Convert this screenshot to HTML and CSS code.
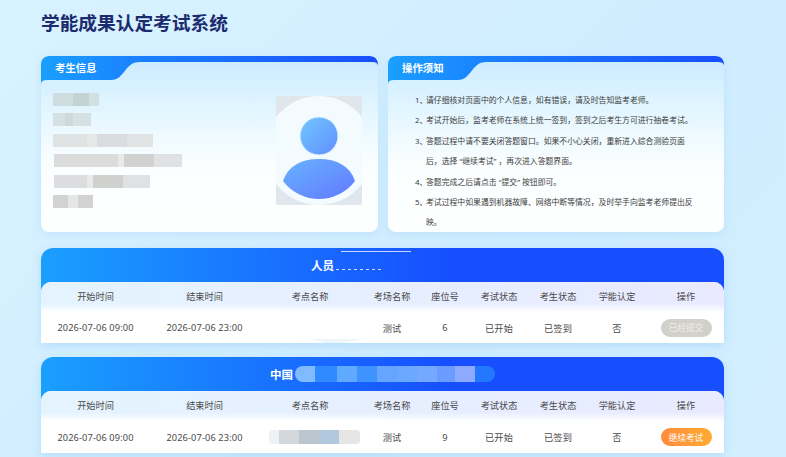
FILE: index.html
```html
<!DOCTYPE html>
<html lang="zh-CN">
<head>
    <meta charset="UTF-8">
    <meta name="viewport" content="width=device-width, initial-scale=1.0">
    <title>学能成果认定考试系统</title>
    <link rel="stylesheet" href="styles.css">
</head>
<body>
    <h1 class="page-title">学能成果认定考试系统</h1>

    <div class="cards">
        <!-- 考生信息 -->
        <section class="card">
            <svg class="card-shape" viewBox="0 0 337 28" preserveAspectRatio="none">
                <defs>
                    <linearGradient id="cardTab" x1="0" y1="0" x2="1" y2="0">
                        <stop offset="0" stop-color="#1a9fff"/>
                        <stop offset="0.3" stop-color="#1a80ff"/>
                        <stop offset="1" stop-color="#1a4dff"/>
                    </linearGradient>
                </defs>
                <path fill="url(#cardTab)" d="M0 28 V8 Q0 0 8 0 H329 Q337 0 337 8 V10 Q337 6 331 6 H99 C90 6 87 11 83 16 C79 21 76 24 70 24 H6 Q0 24 0 28 Z"/>
            </svg>
            <h2 class="card-title">考生信息</h2>
            <div class="info">
                <div class="info-list">
                    <div class="blur-row blur-1"></div>
                    <div class="blur-row blur-2"></div>
                    <div class="blur-row blur-3"></div>
                    <div class="blur-row blur-4"></div>
                    <div class="blur-row blur-5"></div>
                    <div class="blur-row blur-6"></div>
                </div>
                <svg class="avatar" viewBox="0 0 86 109">
                    <defs>
                        <linearGradient id="avatarFill" x1="0" y1="0" x2="1" y2="1">
                            <stop offset="0" stop-color="#74c8ff"/>
                            <stop offset="1" stop-color="#5f8dff"/>
                        </linearGradient>
                        <linearGradient id="avatarBody" x1="0" y1="0" x2="1" y2="1">
                            <stop offset="0" stop-color="#66b4ff"/>
                            <stop offset="1" stop-color="#6478ff"/>
                        </linearGradient>
                        <clipPath id="avatarClip">
                            <rect width="86" height="109" rx="2"/>
                        </clipPath>
                    </defs>
                    <g clip-path="url(#avatarClip)">
                        <rect width="86" height="109" fill="#dfe6ec"/>
                        <circle cx="43" cy="54.5" r="54.5" fill="#f3fbff"/>
                        <circle cx="43" cy="40" r="19" fill="url(#avatarFill)" stroke="#dff1ff" stroke-width="1"/>
                        <path fill="url(#avatarBody)" d="M7 85 C12 70 25 63 43 63 C61 63 74 70 79 85 C70 97 56 103 43 103 C30 103 16 97 7 85 Z"/>
                    </g>
                </svg>
            </div>
        </section>

        <!-- 操作须知 -->
        <section class="card">
            <svg class="card-shape" viewBox="0 0 337 28" preserveAspectRatio="none">
                <path fill="url(#cardTab)" d="M0 28 V8 Q0 0 8 0 H329 Q337 0 337 8 V10 Q337 6 331 6 H99 C90 6 87 11 83 16 C79 21 76 24 70 24 H6 Q0 24 0 28 Z"/>
            </svg>
            <h2 class="card-title">操作须知</h2>
            <ol class="notes">
                <li><span>1、</span><p>请仔细核对页面中的个人信息&#xFF0C;如有错误&#xFF0C;请及时告知监考老师。</p></li>
                <li><span>2、</span><p>考试开始后&#xFF0C;监考老师在系统上统一签到&#xFF0C;签到之后考生方可进行抽卷考试。</p></li>
                <li><span>3、</span><p>答题过程中请不要关闭答题窗口。如果不小心关闭&#xFF0C;重新进入综合测验页面<br>后&#xFF0C;选择 “继续考试” &#xFF0C;再次进入答题界面。</p></li>
                <li><span>4、</span><p>答题完成之后请点击 “提交” 按钮即可。</p></li>
                <li><span>5、</span><p>考试过程中如果遇到机器故障、网络中断等情况&#xFF0C;及时举手向监考老师提出反<br>映。</p></li>
            </ol>
        </section>
    </div>

    <section class="exam">
        <div class="exam-title"><span>人员</span><i class="mask-thin"></i></div>
        <div class="exam-table">
            <div class="grid-row head">
                <div>开始时间</div><div>结束时间</div><div>考点名称</div><div>考场名称</div><div>座位号</div><div>考试状态</div><div>考生状态</div><div>学能认定</div><div>操作</div>
            </div>
            <div class="grid-row body">
                <div>2026-07-06 09:00</div><div>2026-07-06 23:00</div><div></div><div>测试</div><div>6</div><div>已开始</div><div>已签到</div><div>否</div>
                <div><button class="btn btn-done">已经提交</button></div>
            </div>
            <i class="smear"></i>
        </div>
    </section>

    <section class="exam">
        <div class="exam-title"><span>中国</span><i class="mask-wide"></i></div>
        <div class="exam-table">
            <div class="grid-row head">
                <div>开始时间</div><div>结束时间</div><div>考点名称</div><div>考场名称</div><div>座位号</div><div>考试状态</div><div>考生状态</div><div>学能认定</div><div>操作</div>
            </div>
            <div class="grid-row body tall">
                <div>2026-07-06 09:00</div><div>2026-07-06 23:00</div><div><i class="mask-site"></i></div><div>测试</div><div>9</div><div>已开始</div><div>已签到</div><div>否</div>
                <div><button class="btn btn-go">继续考试</button></div>
            </div>
        </div>
    </section>
</body>
</html>
```

FILE: styles.css
```css
html, body {
    height: 100%;
}
body {
    margin: 0;
    padding: 0 62px 0 41px;
    box-sizing: border-box;
    overflow: hidden;
    background: linear-gradient(135deg, #d9f2ff, #cfedff 60%, #d3efff);
    color: #4a4a4a;
    font-family: "Noto Sans", "Noto Sans CJK SC", sans-serif;
}
.page-title {
    margin: 0;
    padding-top: 10px;
    height: 56px;
    box-sizing: border-box;
    font-size: 18.7px;
    line-height: 26px;
    font-weight: 700;
    color: #1b2c6e;
}

/* top cards */
.cards {
    display: grid;
    grid-template-columns: 337px 336px;
    gap: 10px;
    height: 176px;
    margin-bottom: 16px;
}
.card {
    position: relative;
    overflow: hidden;
    border-radius: 8px;
    background: linear-gradient(180deg, #c9ebff 0, #e6f7ff 35%, #fbfeff 62%, #fdffff 100%);
    box-shadow: 0 2px 8px rgba(120, 180, 230, 0.2);
}
.card-shape {
    position: absolute;
    top: 0;
    left: 0;
    width: 100%;
    height: 28px;
}
.card-title {
    position: relative;
    margin: 0;
    padding-left: 14px;
    height: 24px;
    font-size: 10.4px;
    line-height: 24px;
    font-weight: 700;
    color: #fff;
}
.info {
    display: flex;
    justify-content: space-between;
    padding: 13px 16px 0 12px;
}
.info-list {
    display: flex;
    flex-direction: column;
    gap: 7.4px;
}
.blur-row {
    height: 13px;
}
.blur-1 {
    width: 46px;
    background: linear-gradient(90deg, #cfdde0 43%, #c3d2d5 43%, #c3d2d5 79%, #d3e0e3 79%);
}
.blur-2 {
    width: 38px;
    background: linear-gradient(90deg, #d6e1e4 31%, #cdd9dc 31%, #cdd9dc 52%, #d6e1e4 52%);
}
.blur-3 {
    width: 100px;
    background: linear-gradient(90deg, #e0e3e3 34%, #e6e8e8 34%, #e6e8e8 44%, #dadcdf 44%, #dadcdf 74%, #e1e3e4 74%);
}
.blur-4 {
    width: 128px;
    margin-left: 1px;
    background: linear-gradient(90deg, #dcdcdd 50%, #e8e9e9 50%, #e8e9e9 55%, #d0d1d0 55%, #d0d1d0 78%, #dfe1e2 78%);
}
.blur-5 {
    width: 96px;
    margin-left: 1px;
    background: linear-gradient(90deg, #dddddf 34%, #e9eaea 34%, #e9eaea 41%, #d0d1cf 41%, #d0d1cf 72%, #e0e1e3 72%);
}
.blur-6 {
    width: 40px;
    background: linear-gradient(90deg, #d2d2d3 37%, #e4e6e7 37%, #e4e6e7 62%, #d2d2d3 62%);
}
.avatar {
    width: 86px;
    height: 109px;
    margin-top: 3px;
}

/* notes */
.notes {
    margin: 0;
    padding: 10px 0 0 27px;
    list-style: none;
    font-size: 7.85px;
    line-height: 20.4px;
    color: #3c3c3c;
}
.notes li {
    display: flex;
}
.notes span {
    flex: none;
    width: 11px;
}
.notes p {
    margin: 0;
    white-space: nowrap;
}

/* exam blocks */
.exam {
    margin-bottom: 14px;
    border-radius: 12px 12px 0 0;
    background: linear-gradient(90deg, #1a9fff, #174fff 60%, #174fff);
    box-shadow: 0 3px 10px rgba(110, 175, 230, 0.28);
}
.exam-title {
    display: flex;
    justify-content: center;
    align-items: center;
    height: 34px;
    font-size: 11.5px;
    font-weight: 700;
    color: #fff;
}
.mask-thin {
    position: relative;
    width: 120px;
    height: 12px;
}
.mask-thin::before {
    content: "";
    position: absolute;
    left: 7px;
    top: -8px;
    width: 70px;
    height: 1px;
    background: rgba(255, 255, 255, 0.75);
}
.mask-thin::after {
    content: "";
    position: absolute;
    left: 2px;
    bottom: 1px;
    width: 48px;
    height: 1px;
    background: repeating-linear-gradient(90deg, rgba(255, 255, 255, 0.8) 0 3px, transparent 3px 6px);
}
.mask-wide {
    width: 200px;
    height: 16px;
    margin-left: 2px;
    border-radius: 8px;
    background: linear-gradient(90deg, #80bbff 20px, #2f8bff 20px, #2f8bff 42px, #5fa9ff 42px, #5fa9ff 62px, #3f93ff 62px, #3f93ff 82px, #65a4ff 82px, #65a4ff 102px, #6aa8ff 102px, #6aa8ff 122px, #75a8ff 122px, #75a8ff 142px, #6a9bff 142px, #6a9bff 160px, #8eaaff 160px, #8eaaff 180px, #2278ff 180px);
}
.exam-table {
    position: relative;
    overflow: hidden;
    border-radius: 10px 10px 0 0;
    background: #fff;
}
.grid-row {
    display: grid;
    grid-template-columns: 109px 109px 102px 62px 44px 64px 54px 64px 74px;
    align-items: center;
    text-align: center;
    font-size: 9.2px;
}
.head {
    height: 30px;
    padding-bottom: 3px;
    box-sizing: border-box;
    background: linear-gradient(180deg, transparent 72%, #fff 100%), linear-gradient(90deg, #e4f4ff, #e9eaff);
}
.body {
    height: 31px;
    letter-spacing: 0.15px;
}
.body.tall {
    height: 32px;
}
.mask-site {
    display: block;
    width: 91px;
    height: 14px;
    margin-left: 10px;
    border-radius: 4px;
    background: linear-gradient(90deg, #eef2f5 10px, #d2d8dc 10px, #d2d8dc 30px, #bcc6cf 30px, #bcc6cf 50px, #b2c9dd 50px, #b2c9dd 70px, #e6e6e4 70px);
}
.smear {
    position: absolute;
    left: 268px;
    bottom: 0;
    width: 54px;
    height: 4px;
    background: #eef7fc;
    clip-path: polygon(0 0, 100% 0, 60% 100%, 30% 100%);
}
.btn {
    display: block;
    width: 51px;
    height: 18px;
    margin: 0 auto;
    padding: 0;
    border: none;
    border-radius: 9px;
    font-family: inherit;
    font-size: 8.6px;
}
.btn-done {
    background: #d2d0ca;
    color: #eeeeea;
}
.btn-go {
    background: linear-gradient(90deg, #ff8b3e, #ffab30);
    color: #fff;
}
```
